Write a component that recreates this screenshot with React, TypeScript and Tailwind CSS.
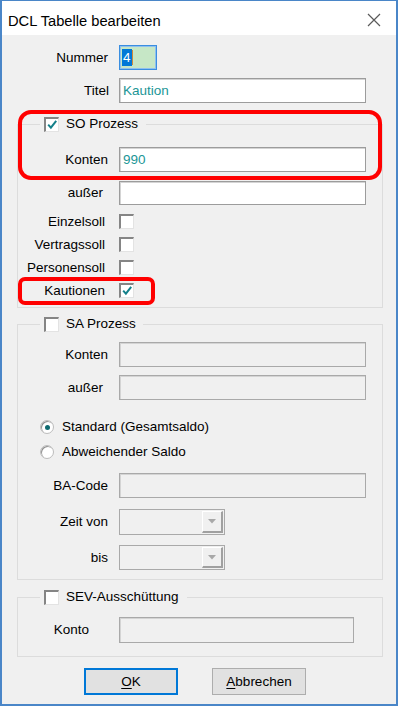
import React from 'react';

type Kids = { children?: React.ReactNode };

function CheckBox({ checked = false }: { checked?: boolean }) {
  return (
    <span className="block w-[15px] h-[15px] shrink-0 bg-white border-t-2 border-l-2 border-r border-b border-t-[#858585] border-l-[#858585] border-r-[#e3e3e3] border-b-[#e3e3e3]">
      {checked && (
        <svg viewBox="0 0 12 12" className="block w-[12px] h-[12px]">
          <path d="M2.2 5.6 L4.9 8.6 L10.2 1.8" fill="none" stroke="#14808a" strokeWidth="2" />
        </svg>
      )}
    </span>
  );
}

function Radio({ on = false }: { on?: boolean }) {
  return (
    <span className="flex items-center justify-center w-[14px] h-[14px] shrink-0 rounded-full bg-white border border-[#bcbcbc] shadow-[inset_1px_1px_0_#8f8f8f]">
      {on && <span className="block w-[5px] h-[5px] rounded-full bg-[#0f6a70]" />}
    </span>
  );
}

function TextBox({ w, h, disabled = false, children }: { w: string; h: string; disabled?: boolean } & Kids) {
  return (
    <div
      className={`${w} ${h} shrink-0 flex items-center pl-[3px] border shadow-[inset_1px_1px_0_#d4d4d4] ${
        disabled ? 'bg-[#f0f0f0] border-[#a9a9a9]' : 'bg-white border-[#9c9c9c]'
      }`}
    >
      {children}
    </div>
  );
}

function ComboBox({ h }: { h: string }) {
  return (
    <div className={`w-[106px] ${h} shrink-0 flex justify-end p-[1px] bg-[#f0f0f0] border border-[#a9a9a9]`}>
      <div className="w-[21px] h-full flex items-center justify-center border-t border-l border-t-white border-l-white border-r-2 border-b-2 border-r-[#a0a0a0] border-b-[#a0a0a0]">
        <svg viewBox="0 0 8 5" className="w-[8px] h-[5px]">
          <path d="M0 0 H8 L4 4.5 Z" fill="#a8a8a8" />
        </svg>
      </div>
    </div>
  );
}

function Label({ w, pr, children }: { w: string; pr: string } & Kids) {
  return <span className={`${w} ${pr} shrink-0 text-right`}>{children}</span>;
}

function Legend({ checked = false, pr, children }: { checked?: boolean; pr: string } & Kids) {
  return (
    <legend className={`ml-[22px] pl-[4px] ${pr}`}>
      <span className="flex items-center h-[16px] gap-[7px]">
        <CheckBox checked={checked} />
        <span>{children}</span>
      </span>
    </legend>
  );
}

function CheckRow({ label, checked = false }: { label: string; checked?: boolean }) {
  return (
    <div className="h-[23px] flex items-center">
      <Label w="w-[91px]" pr="pr-[4px]">{label}</Label>
      <span className="ml-[10px]">
        <CheckBox checked={checked} />
      </span>
    </div>
  );
}

export default function App() {
  return (
    <div className="relative w-[400px] h-[708px] bg-white text-[13.5px] leading-[16px] text-black font-['Liberation_Sans',Arial,sans-serif]">
      {/* dialog window */}
      <div className="w-[398px] h-[706px] flex flex-col border-2 border-t border-[#4a86c8] bg-[#f0f0f0]">
        <div className="h-[34px] shrink-0 flex items-start justify-between bg-white">
          <span className="ml-[6px] mt-[11px] text-[14.7px] leading-[18px]">DCL Tabelle bearbeiten</span>
          <svg viewBox="0 0 14 14" className="w-[14px] h-[14px] mt-[12px] mr-[15px]">
            <path d="M1 1 L13 13 M13 1 L1 13" stroke="#5a5a5a" strokeWidth="1.2" />
          </svg>
        </div>

        <div className="flex flex-col pl-[15px] pr-[13px] pt-[10px]">
          <div className="flex items-center h-[25px]">
            <Label w="w-[92px]" pr="pr-[1px]">Nummer</Label>
            <div className="ml-[10px] w-[38px] h-[25px] flex items-center pl-[2px] bg-[#c6e7c6] border border-[#3a8ee0] shadow-[inset_0_0_0_1px_#8fc0ee]">
              <span className="bg-[#0078d7] text-white px-[1px] leading-[17px]">4</span>
              <span className="w-[1px] h-[15px] bg-[#d08a3a]" />
            </div>
          </div>
          <div className="flex items-center h-[25px] mt-[8px]">
            <Label w="w-[92px]" pr="pr-[0px]">Titel</Label>
            <span className="ml-[10px]">
              <TextBox w="w-[247px]" h="h-[25px]">
                <span className="text-[#1b9696]">Kaution</span>
              </TextBox>
            </span>
          </div>

          {/* SO Prozess */}
          <fieldset className="mt-[13px] border border-[#dcdcdc] pr-[16px] pb-[5px]">
            <Legend checked pr="pr-[8px]">SO Prozess</Legend>
            <div className="flex flex-col pt-[15px]">
              <div className="flex items-center h-[25px]">
                <Label w="w-[91px]" pr="pr-[1px]">Konten</Label>
                <span className="ml-[10px]">
                  <TextBox w="w-[247px]" h="h-[25px]">
                    <span className="text-[#1b9696]">990</span>
                  </TextBox>
                </span>
              </div>
              <div className="flex items-center h-[24px] mt-[9px]">
                <Label w="w-[91px]" pr="pr-[6px]">außer</Label>
                <span className="ml-[10px]">
                  <TextBox w="w-[247px]" h="h-[24px]" />
                </span>
              </div>
              <div className="flex flex-col mt-[5px]">
                <CheckRow label="Einzelsoll" />
                <CheckRow label="Vertragssoll" />
                <CheckRow label="Personensoll" />
                <CheckRow label="Kautionen" checked />
              </div>
            </div>
          </fieldset>

          {/* SA Prozess */}
          <fieldset className="mt-[8px] border border-[#dcdcdc] pr-[16px] pb-[9px]">
            <Legend pr="pr-[7px]">SA Prozess</Legend>
            <div className="flex flex-col pt-[10px]">
              <div className="flex items-center h-[25px]">
                <Label w="w-[91px]" pr="pr-[1px]">Konten</Label>
                <span className="ml-[10px]">
                  <TextBox w="w-[247px]" h="h-[25px]" disabled />
                </span>
              </div>
              <div className="flex items-center h-[25px] mt-[8px]">
                <Label w="w-[91px]" pr="pr-[6px]">außer</Label>
                <span className="ml-[10px]">
                  <TextBox w="w-[247px]" h="h-[25px]" disabled />
                </span>
              </div>
              <div className="flex items-center h-[22px] mt-[16px] pl-[22px] gap-[8px]">
                <Radio on />
                <span>Standard (Gesamtsaldo)</span>
              </div>
              <div className="flex items-center h-[22px] mt-[3px] pl-[22px] gap-[8px]">
                <Radio />
                <span>Abweichender Saldo</span>
              </div>
              <div className="flex items-center h-[25px] mt-[10px]">
                <Label w="w-[91px]" pr="pr-[1px]">BA-Code</Label>
                <span className="ml-[10px]">
                  <TextBox w="w-[247px]" h="h-[25px]" disabled />
                </span>
              </div>
              <div className="flex items-center h-[26px] mt-[11px]">
                <Label w="w-[91px]" pr="pr-[1px]">Zeit von</Label>
                <span className="ml-[10px]">
                  <ComboBox h="h-[26px]" />
                </span>
              </div>
              <div className="flex items-center h-[25px] mt-[10px]">
                <Label w="w-[91px]" pr="pr-[1px]">bis</Label>
                <span className="ml-[10px]">
                  <ComboBox h="h-[25px]" />
                </span>
              </div>
            </div>
          </fieldset>

          {/* SEV-Ausschüttung */}
          <fieldset className="mt-[9px] border border-[#dcdcdc] pr-[16px] pb-[13px]">
            <Legend pr="pr-[8px]">SEV-Ausschüttung</Legend>
            <div className="flex items-center h-[26px] mt-[12px]">
              <Label w="w-[91px]" pr="pr-[20px]">Konto</Label>
              <span className="ml-[10px]">
                <TextBox w="w-[235px]" h="h-[26px]" disabled />
              </span>
            </div>
          </fieldset>

          <div className="flex mt-[11px] ml-[67px] gap-[34px]">
            <button className="w-[94px] h-[27px] bg-[#e1e1e1] border-2 border-[#0078d7]">
              <span className="underline underline-offset-2">O</span>K
            </button>
            <button className="w-[94px] h-[27px] bg-[#e1e1e1] border border-[#adadad]">
              <span className="underline underline-offset-2">A</span>bbrechen
            </button>
          </div>
        </div>
      </div>

      {/* red annotation frames */}
      <div className="absolute left-[18px] top-[110px] w-[364px] h-[70px] border-4 border-[#ff0000] rounded-[13px]" />
      <div className="absolute left-[18px] top-[277px] w-[137px] h-[28px] border-4 border-[#ff0000] rounded-[7px]" />
    </div>
  );
}
